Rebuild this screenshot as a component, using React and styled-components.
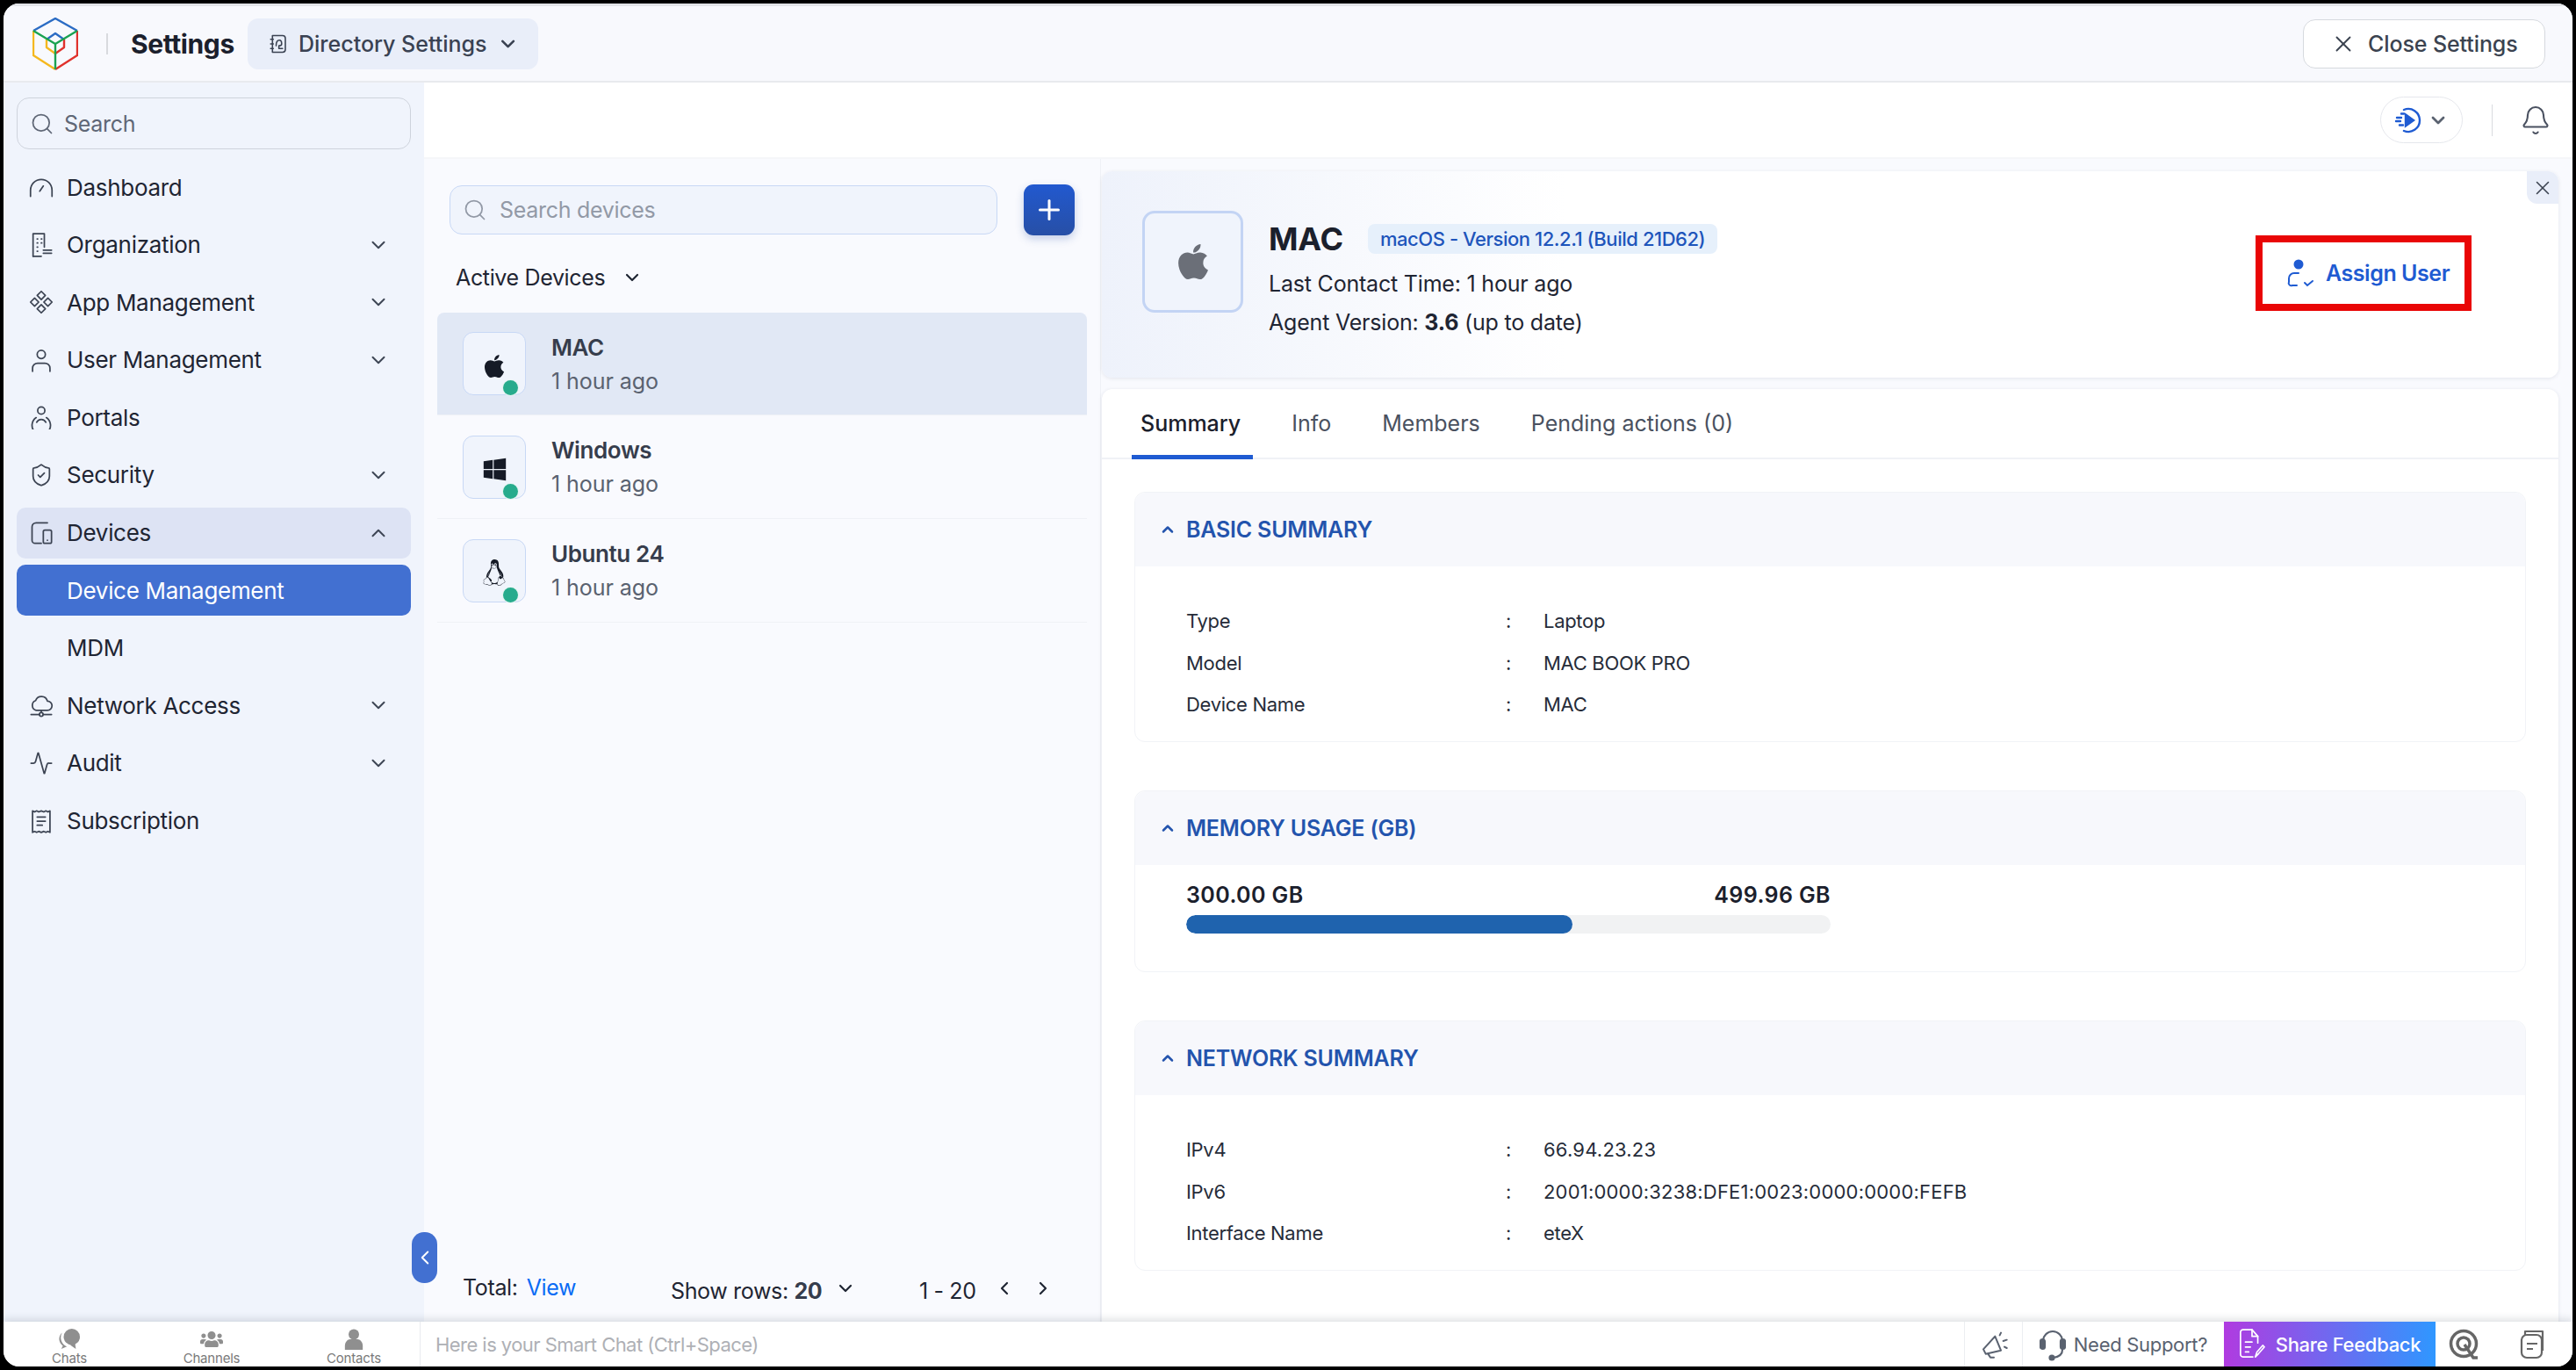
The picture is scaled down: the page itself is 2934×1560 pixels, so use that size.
import React from "react";
import styled, { createGlobalStyle } from "styled-components";
import { FaApple, FaWindows, FaLinux, FaUsers } from "react-icons/fa";
import { ChevronDown, ChevronUp, ChevronLeft, ChevronRight, Search, X, Plus, Bell, ShieldCheck, Activity } from "lucide-react";

const GlobalStyle = createGlobalStyle`
  html, body { margin: 0; padding: 0; background: #000; }
  * { box-sizing: border-box; }
  body { font-family: Inter, "Noto Sans", sans-serif; color: #1c2230; }
`;

const Frame = styled.div`
  width: 2934px;
  height: 1560px;
  padding: 4px;
  background: #000;
`;

const Shell = styled.div`
  width: 100%;
  height: 100%;
  display: flex;
  flex-direction: column;
  background: #fff;
  border-radius: 18px;
  overflow: hidden;
`;

const Header = styled.header`
  height: 90px;
  flex: none;
  display: flex;
  align-items: center;
  padding: 0 31px 0 33px;
  background: #f8f9fd;
  border-top: 3px solid #e2e4e8;
  border-bottom: 2px solid #e8eaee;
`;

const Divider = styled.span`
  width: 2px;
  height: 24px;
  margin: 0 26px 0 32px;
  background: #d8dade;
`;

const AppTitle = styled.h1`
  margin: 0 15px 0 0;
  font-size: 30px;
  font-weight: 700;
  letter-spacing: -0.4px;
  color: #1b202c;
`;

const DirectoryPill = styled.div`
  height: 58px;
  width: 331px;
  display: flex;
  align-items: center;
  gap: 11px;
  padding: 0 22px;
  border-radius: 12px;
  background: #e9eef9;
  font-size: 25px;
  font-weight: 500;
  color: #3a4252;
  letter-spacing: 0;
  white-space: nowrap;
`;

const CloseButton = styled.button`
  margin-left: auto;
  height: 56px;
  width: 276px;
  display: flex;
  align-items: center;
  gap: 13px;
  padding: 0 0 0 30px;
  border: 1.5px solid #d6d9de;
  border-radius: 14px;
  background: #fff;
  font: 500 25px Inter, sans-serif;
  letter-spacing: -0.1px;
  color: #3b4350;
  white-space: nowrap;
`;

const Body = styled.div`
  flex: 1;
  min-height: 0;
  display: flex;
  position: relative;
`;

const Sidebar = styled.aside`
  width: 479px;
  flex: none;
  padding: 17px 15px;
  background: #f0f4fc;
  display: flex;
  flex-direction: column;
`;

const SearchBox = styled.div`
  height: ${(p) => (p.$tall ? "56px" : "59px")};
  display: flex;
  align-items: center;
  gap: ${(p) => (p.$tall ? "14px" : "11px")};
  padding: 0 14px;
  flex: ${(p) => (p.$grow ? 1 : "none")};
  border: 1.5px solid ${(p) => (p.$tall ? "#c8d8f5" : "#ced3dc")};
  border-radius: 14px;
  background: #f0f4fc;
  font-size: 25px;
  letter-spacing: -0.3px;
  color: ${(p) => (p.$tall ? "#9299a6" : "#5f6776")};
`;

const NavList = styled.nav`
  margin-top: 14px;
  display: flex;
  flex-direction: column;
  gap: 7.6px;
`;

const NavItem = styled.div`
  height: 58px;
  display: flex;
  align-items: center;
  padding: 0 24px 0 14px;
  border-radius: 10px;
  font-size: 26px;
  letter-spacing: -0.3px;
  color: ${(p) => (p.$active ? "#fff" : "#1f2533")};
  background: ${(p) => (p.$active ? "#4270d1" : p.$open ? "#dde3f4" : "transparent")};
`;

const NavIcon = styled.span`
  width: 43px;
  flex: none;
  display: flex;
  color: #3d4554;
`;

const NavLabel = styled.span`
  flex: 1;
  padding-left: ${(p) => (p.$child ? "43px" : 0)};
  white-space: nowrap;
`;

const ListPanel = styled.section`
  width: 770px;
  flex: none;
  display: flex;
  flex-direction: column;
  padding: 29px 15px 0;
  background: #f9fafe;
`;

const SubHeader = styled.div`
  height: 87px;
  flex: none;
  display: flex;
  align-items: center;
  justify-content: flex-end;
  padding: 0 24px 0 0;
  background: #fff;
  border-bottom: 2px solid #f5f6f9;
`;

const PlayPill = styled.div`
  width: 94px;
  height: 53px;
  display: flex;
  align-items: center;
  justify-content: center;
  gap: 6px;
  border: 1.5px solid #e5e7ec;
  border-radius: 27px;
  color: #5a6270;
`;

const VLine = styled.span`
  width: 1.5px;
  height: 36px;
  margin: 0 31px 0 33px;
  background: #d9dbe0;
`;

const MainColumn = styled.div`
  flex: 1;
  min-width: 0;
  display: flex;
  flex-direction: column;
`;

const Columns = styled.div`
  flex: 1;
  min-height: 0;
  display: flex;
`;

const SearchRow = styled.div`
  display: flex;
  align-items: center;
  gap: 30px;
  padding: 0 14px;
`;

const AddButton = styled.button`
  width: 58px;
  height: 58px;
  flex: none;
  display: flex;
  align-items: center;
  justify-content: center;
  padding: 0;
  border: 0;
  border-radius: 11px;
  color: #fff;
  background: linear-gradient(180deg, #2259cf, #274fa6);
  box-shadow: 0 4px 10px rgba(39, 79, 166, 0.25);
`;

const FilterRow = styled.div`
  height: 30px;
  margin: 33px 0 25px 21px;
  display: flex;
  align-items: center;
  gap: 19px;
  font-size: 25px;
  letter-spacing: -0.35px;
  color: #1f2533;
`;

const DeviceRow = styled.div`
  height: ${(p) => (p.$active ? "117px" : "118px")};
  display: flex;
  align-items: center;
  gap: 29px;
  padding: 0 29px;
  border-radius: ${(p) => (p.$active ? "8px 8px 0 0" : 0)};
  background: ${(p) => (p.$active ? "#e1e8f5" : "transparent")};
  border-bottom: 1.5px solid #eff1f6;
`;

const DeviceIcon = styled.div`
  width: 72px;
  height: 72px;
  flex: none;
  position: relative;
  display: flex;
  align-items: center;
  justify-content: center;
  padding-top: 5px;
  border: 1.5px solid #c8d8f5;
  border-radius: 12px;
  background: #f0f4fc;
  color: #151a26;
`;

const StatusDot = styled.span`
  position: absolute;
  right: 8px;
  bottom: -1px;
  width: 17px;
  height: 17px;
  border-radius: 50%;
  background: #27ab8d;
  box-shadow: 0 0 0 1px #e4f5f0;
`;

const DeviceName = styled.div`
  font-size: 26px;
  font-weight: 600;
  letter-spacing: -0.4px;
  color: #363d4c;
`;

const DeviceTime = styled.div`
  margin-top: 8px;
  font-size: 25px;
  letter-spacing: -0.05px;
  color: #5a6270;
`;

const ListFooter = styled.div`
  margin-top: auto;
  height: 62px;
  display: flex;
  padding: 0 0 0 29px;
  font-size: 25px;
  letter-spacing: -0.35px;
  color: #1f2533;
`;

const TotalLabel = styled.div`
  width: 237px;
  padding-top: 8px;
`;

const ViewLink = styled.span`
  margin-left: 10px;
  color: #0a6cf5;
`;

const RowsControl = styled.div`
  width: 283px;
  display: flex;
  align-items: flex-start;
  gap: 15px;
  padding-top: 12px;
`;

const Strong = styled.b`
  font-weight: 700;
  color: #363d4c;
`;

const Pager = styled.div`
  display: flex;
  align-items: flex-start;
  gap: 20px;
  padding-top: 12px;
`;

const DetailPanel = styled.section`
  flex: 1;
  min-width: 0;
  padding: 14px 16px 0 1px;
  background: #f9fafe;
  border-left: 1.5px solid #eff1f6;
`;

const DeviceCard = styled.div`
  height: 235px;
  position: relative;
  display: flex;
  align-items: center;
  padding: 0 0 0 46px;
  border-radius: 12px;
  background: linear-gradient(90deg, #eef2fb 0%, #fff 32%);
  box-shadow: 0 1px 4px rgba(30, 40, 70, 0.1);
`;

const CloseTab = styled.div`
  position: absolute;
  top: 0;
  right: 0;
  width: 36px;
  height: 37px;
  display: flex;
  align-items: center;
  justify-content: center;
  border-radius: 0 12px 0 12px;
  background: #e9eef9;
  color: #3b4350;
`;

const LargeIcon = styled.div`
  width: 115px;
  height: 116px;
  flex: none;
  margin-bottom: 30px;
  display: flex;
  align-items: center;
  justify-content: center;
  border: 3px solid #c3d4f4;
  border-radius: 14px;
  background: #f0f4fc;
  color: #6b6f78;
`;

const DeviceMeta = styled.div`
  margin-left: 29px;
  padding-top: 6px;
  display: flex;
  flex-direction: column;
  gap: 14px;
  font-size: 25px;
  letter-spacing: -0.2px;
  color: #1f2533;
`;

const TitleRow = styled.div`
  display: flex;
  align-items: center;
  gap: 28px;
`;

const DeviceTitle = styled.div`
  font-size: 36px;
  font-weight: 700;
  color: #1b202c;
`;

const VersionBadge = styled.span`
  padding: 4px 14px;
  border-radius: 8px;
  background: #e6f0fb;
  font-size: 22px;
  font-weight: 500;
  letter-spacing: -0.45px;
  color: #1e55bb;
`;

const AssignBox = styled.div`
  position: absolute;
  left: 1314px;
  top: 73px;
  width: 246px;
  height: 86px;
  display: flex;
  align-items: center;
  gap: 13px;
  padding-left: 27px;
  border: 8px solid #e90606;
  font-size: 25px;
  font-weight: 600;
  letter-spacing: -0.45px;
  color: #1f5bd2;
  white-space: nowrap;
`;

const TabsCard = styled.div`
  height: 1080px;
  margin-top: 13px;
  border-radius: 12px 12px 0 0;
  background: #fff;
  box-shadow: 0 1px 4px rgba(30, 40, 70, 0.12);
`;

const TabBar = styled.div`
  height: 80px;
  display: flex;
  gap: 58px;
  padding: 0 0 0 44px;
  border-bottom: 2px solid #f0f2f6;
`;

const Tab = styled.div`
  position: relative;
  height: 80px;
  padding: 24px 0 0;
  font-size: 25px;
  font-weight: ${(p) => (p.$active ? 500 : 400)};
  letter-spacing: 0;
  color: ${(p) => (p.$active ? "#1b202c" : "#4a5160")};
  ${(p) => p.$active && `
    &::after {
      content: "";
      position: absolute;
      left: -10px;
      right: -14px;
      bottom: 0;
      height: 5px;
      background: #1f5bd2;
    }
  `}
`;

const Sections = styled.div`
  display: flex;
  flex-direction: column;
  gap: 55px;
  padding: 37px 37px 0 37px;
`;

const SectionCard = styled.div`
  height: ${(p) => p.$height}px;
  border: 1.5px solid #f1f3f7;
  border-radius: 12px;
`;

const SectionHead = styled.div`
  height: 84px;
  display: flex;
  align-items: center;
  gap: 11px;
  padding-left: 27px;
  background: #f7f8fc;
  border-radius: 12px 12px 0 0;
  font-size: 25px;
  font-weight: 600;
  letter-spacing: -0.2px;
  color: #2354ad;
`;

const InfoRows = styled.div`
  padding: 48px 0 0 58px;
  display: flex;
  flex-direction: column;
  gap: 19.6px;
`;

const InfoRow = styled.div`
  height: 28px;
  display: grid;
  grid-template-columns: 364px 43px 1fr;
  align-items: center;
  font-size: 22px;
  letter-spacing: -0.3px;
  color: #262c39;
`;

const InfoValue = styled.span`
  letter-spacing: ${(p) => (p.$numeric ? "0.2px" : "-0.3px")};
`;

const Usage = styled.div`
  width: 734px;
  margin: 19px 0 0 58px;
`;

const UsageLabels = styled.div`
  display: flex;
  justify-content: space-between;
  font-size: 25px;
  font-weight: 600;
  letter-spacing: 0.4px;
  color: #1b202c;
`;

const UsageTrack = styled.div`
  height: 21px;
  margin-top: 8px;
  border-radius: 11px;
  background: #f1f2f3;
  overflow: hidden;
`;

const UsageFill = styled.div`
  height: 100%;
  border-radius: 11px;
  background: #1f63ae;
`;

const CollapseHandle = styled.div`
  position: absolute;
  left: 465px;
  bottom: 44px;
  width: 29px;
  height: 58px;
  display: flex;
  align-items: center;
  justify-content: center;
  border-radius: 14px;
  background: #4270d1;
  color: #fff;
`;

const ChatBar = styled.footer`
  height: 51px;
  flex: none;
  position: relative;
  display: flex;
  align-items: stretch;
  background: #fff;
  box-shadow: 0 -3px 8px rgba(30, 40, 60, 0.14);
`;

const ChatTabs = styled.div`
  width: 475px;
  flex: none;
  display: flex;
  justify-content: center;
  border-right: 1.5px solid #e9ebef;
`;

const ChatTab = styled.div`
  width: 162px;
  flex: none;
  display: flex;
  flex-direction: column;
  align-items: center;
  padding-top: 8px;
  font-size: 15px;
  letter-spacing: -0.2px;
  color: #7a7a7a;
`;

const ChatInput = styled.div`
  flex: 1;
  display: flex;
  align-items: center;
  padding-left: 17px;
  font-size: 22px;
  letter-spacing: -0.55px;
  color: #aeb0b5;
`;

const BarCell = styled.div`
  display: flex;
  align-items: center;
  justify-content: center;
  gap: 9px;
  width: ${(p) => p.$width}px;
  border-left: ${(p) => (p.$line ? "1.5px solid #eceef1" : 0)};
  font-size: 22px;
  letter-spacing: -0.3px;
  color: #5a6270;
`;

const FeedbackCell = styled(BarCell)`
  background: linear-gradient(90deg, #b03be0, #2f97ff);
  color: #fff;
  font-weight: 500;
  gap: 12px;
`;

const Svg = ({ size = 28, vb = 24, children, sw = 1.5 }) => (
  <svg width={size} height={size} viewBox={`0 0 ${vb} ${vb}`} fill="none" stroke="currentColor" strokeWidth={sw} strokeLinecap="round" strokeLinejoin="round">
    {children}
  </svg>
);

const Logo = () => (
  <svg width="52" height="60" viewBox="0 0 52 60" fill="none" strokeWidth="2.4" strokeLinejoin="round">
    <path d="M1 15 26 1l25 14" stroke="#2b6cc4" />
    <path d="M16 25 26 18l10 7" stroke="#2b6cc4" />
    <path d="M1 15v28l25 16" stroke="#f5b81e" />
    <path d="M16 25v9l10 7" stroke="#f5b81e" />
    <path d="M51 15v28L26 59" stroke="#e0322c" />
    <path d="M36 25v9l-10 7" stroke="#e0322c" />
    <path d="M1 15 26 30 51 15M26 30v29" stroke="#1aa251" />
  </svg>
);

const BookIcon = () => (
  <Svg size={28}>
    <path d="M6 3h11a3 3 0 0 1 3 3v12a3 3 0 0 1-3 3H6z" />
    <path d="M4 7h3M4 12h3M4 17h3" />
    <path d="M10 14c0-4 1-6 3.5-6S16 10 16 12s-3 2-3 2v3h4" />
  </Svg>
);

const GaugeIcon = () => (
  <Svg>
    <path d="M1.500 21v-6a10.500 10.500 0 0 1 21 0v6" />
    <path d="M10.500 16l3.500-5" />
  </Svg>
);

const BuildingIcon = () => (
  <Svg>
    <path d="M4 23V1h11v13" />
    <path d="M4 23h8M8 6h.5M12 6h.5M8 10h.5M12 10h.5M8 14h.5M8 18h.5M14 17h8M14 20h8" />
  </Svg>
);

const AppsIcon = () => (
  <Svg>
    <path d="M12 1.500l4 4-4 4-4-4zM12 14.500l4 4-4 4-4-4zM5.500 8l4 4-4 4-4-4zM18.500 8l4 4-4 4-4-4z" />
  </Svg>
);

const UserIcon = () => (
  <Svg>
    <circle cx="12" cy="6.500" r="4" />
    <path d="M3.500 23v-3a5 5 0 0 1 5-5h7a5 5 0 0 1 5 5v3" />
  </Svg>
);

const PortalIcon = () => (
  <Svg>
    <circle cx="12" cy="5.500" r="3.500" />
    <path d="M7 12.500a9 9 0 1 0 10 0" />
    <path d="M7.500 17a5 5 0 0 1 9 0" />
  </Svg>
);

const DevicesIcon = () => (
  <Svg>
    <path d="M18 2H7a4 4 0 0 0-4 4v13a3 3 0 0 0 3 3h6" />
    <rect x="14" y="9" width="8" height="13" rx="1.500" />
    <path d="M18 19h.01" />
  </Svg>
);

const CloudIcon = () => (
  <Svg>
    <path d="M7 17a5 5 0 0 1-.5-9.500 6 6 0 0 1 11.500.5 4.500 4.500 0 0 1 0 9z" />
    <path d="M2 21h8M14 21h8M12 17v2" />
    <circle cx="12" cy="21" r="1.800" />
  </Svg>
);

const ReceiptIcon = () => (
  <Svg>
    <path d="M3.500 2l2 1 2-1 2 1 2.500-1 2.500 1 2-1 2 1 2-1v21l-2-1-2 1-2-1-2.500 1-2.500-1-2 1-2-1-2 1z" />
    <path d="M8 8h8M8 12h8M8 16h5" />
  </Svg>
);

const PlayIcon = () => (
  <svg width="32" height="32" viewBox="0 0 32 32" fill="none" stroke="#1f5bd2" strokeWidth="2.400" strokeLinecap="round">
    <path d="M11 4a13 13 0 1 1 0 24" />
    <path d="M11 8.500h-3M8 13H3M7 17H2M10 21.500H6" />
    <path d="M13 9.500l9 6.500-9 6.500z" fill="#1f5bd2" />
  </svg>
);

const AssignIcon = () => (
  <svg width="32" height="34" viewBox="0 0 32 34" fill="none" stroke="#1f5bd2" strokeWidth="2" strokeLinecap="round">
    <circle cx="14" cy="7" r="5.500" fill="#1f5bd2" stroke="none" />
    <path d="M14 17H9a6 6 0 0 0-6 6v4a3 3 0 0 0 4 4h5" />
    <path d="M21 28l3 3 6-5" />
  </svg>
);

const ChatsIcon = () => (
  <svg width="28" height="26" viewBox="0 0 28 26" fill="#8f8f8f">
    <ellipse cx="17" cy="10" rx="10" ry="10" />
    <path d="M5 5a10 10 0 0 0 1 16l-2 4 7-3a12 12 0 0 1-6-17z" />
    <path d="M15 20l7 5-1-7z" />
  </svg>
);

const ContactIcon = () => (
  <svg width="24" height="26" viewBox="0 0 24 26" fill="#8f8f8f">
    <circle cx="12" cy="7" r="6.500" />
    <path d="M1 26v-5c0-5 4-8 6-8h10c2 0 6 3 6 8v5z" />
  </svg>
);

const MegaphoneIcon = () => (
  <Svg size={32}>
    <path d="M3 16l10-11 5 12-13 3z" />
    <path d="M7 20l2 3h3M17 4l1-2M20 9l3-1M21 14l2 1" />
  </Svg>
);

const HeadsetIcon = () => (
  <svg width="30" height="38" viewBox="0 0 30 38" fill="none" stroke="#5a6270" strokeWidth="2.200" strokeLinecap="round">
    <path d="M4 15a11 11 0 0 1 22 0" />
    <rect x="1" y="13" width="5" height="11" rx="2.500" fill="#5a6270" />
    <rect x="24" y="13" width="5" height="11" rx="2.500" fill="#5a6270" />
    <path d="M26 25c0 5-4 8-10 9" />
    <circle cx="14" cy="34" r="2.500" fill="#5a6270" />
  </svg>
);

const FeedbackIcon = () => (
  <svg width="30" height="38" viewBox="0 0 32 40" fill="none" stroke="#fff" strokeWidth="1.800" strokeLinejoin="round" strokeLinecap="round">
    <path d="M17 35H5a3 3 0 0 1-3-3V5a3 3 0 0 1 3-3h11l7 8v8" />
    <path d="M16 2v8h7M8 17h8M8 23h6M8 29h4" />
    <path d="M20 35l2-6 7-8 2 2-7 8z" />
  </svg>
);

const QIcon = () => (
  <svg width="34" height="42" viewBox="0 0 34 42" fill="none" stroke="#666" strokeWidth="3.500">
    <circle cx="17" cy="20" r="14.500" />
    <circle cx="17" cy="20" r="7" />
    <path d="M18 21l10 15h5" />
  </svg>
);

const NotesIcon = () => (
  <svg width="30" height="34" viewBox="0 0 30 34" fill="none" stroke="#666" strokeWidth="2.200" strokeLinejoin="round">
    <rect x="3" y="6" width="23" height="26" rx="6" />
    <path d="M7 6V2h20v22" />
    <path d="M9 16h12M9 22h7" />
  </svg>
);

const navItems = [
  { label: "Dashboard", icon: <GaugeIcon /> },
  { label: "Organization", icon: <BuildingIcon />, chevron: true },
  { label: "App Management", icon: <AppsIcon />, chevron: true },
  { label: "User Management", icon: <UserIcon />, chevron: true },
  { label: "Portals", icon: <PortalIcon /> },
  { label: "Security", icon: <ShieldCheck size={28} strokeWidth={1.5} />, chevron: true },
  { label: "Devices", icon: <DevicesIcon />, open: true },
  { label: "Device Management", child: true, active: true },
  { label: "MDM", child: true },
  { label: "Network Access", icon: <CloudIcon />, chevron: true },
  { label: "Audit", icon: <Activity size={28} strokeWidth={1.5} />, chevron: true },
  { label: "Subscription", icon: <ReceiptIcon /> },
];

const devices = [
  { name: "MAC", icon: <FaApple size={30} />, active: true },
  { name: "Windows", icon: <FaWindows size={29} /> },
  { name: "Ubuntu 24", icon: <FaLinux size={30} /> },
];

const basicRows = [
  ["Type", "Laptop"],
  ["Model", "MAC BOOK PRO"],
  ["Device Name", "MAC"],
];

const networkRows = [
  ["IPv4", "66.94.23.23"],
  ["IPv6", "2001:0000:3238:DFE1:0023:0000:0000:FEFB"],
  ["Interface Name", "eteX"],
];

const Details = ({ rows }) => (
  <InfoRows>
    {rows.map(([key, value]) => (
      <InfoRow key={key}>
        <span>{key}</span>
        <span>:</span>
        <InfoValue $numeric={/\d/.test(value)}>{value}</InfoValue>
      </InfoRow>
    ))}
  </InfoRows>
);

const App = () => {
  return (
    <Frame>
      <GlobalStyle />
      <Shell>
        <Header>
          <Logo />
          <Divider />
          <AppTitle>Settings</AppTitle>
          <DirectoryPill>
            <BookIcon />
            Directory Settings
            <ChevronDown size={28} strokeWidth={2.5} />
          </DirectoryPill>
          <CloseButton>
            <X size={30} strokeWidth={1.5} />
            Close Settings
          </CloseButton>
        </Header>
        <Body>
          <Sidebar>
            <SearchBox>
              <Search size={28} strokeWidth={1.5} />
              Search
            </SearchBox>
            <NavList>
              {navItems.map((item) => (
                <NavItem key={item.label} $active={item.active} $open={item.open}>
                  {item.icon && <NavIcon>{item.icon}</NavIcon>}
                  <NavLabel $child={item.child}>{item.label}</NavLabel>
                  {item.chevron && <ChevronDown size={26} strokeWidth={1.8} color="#3d4554" />}
                  {item.open && <ChevronUp size={26} strokeWidth={1.8} color="#3d4554" />}
                </NavItem>
              ))}
            </NavList>
          </Sidebar>
          <MainColumn>
            <SubHeader>
              <PlayPill>
                <PlayIcon />
                <ChevronDown size={24} strokeWidth={2.8} />
              </PlayPill>
              <VLine />
              <Bell size={36} strokeWidth={1.4} color="#4a5160" />
            </SubHeader>
            <Columns>
              <ListPanel>
                <SearchRow>
                  <SearchBox $tall $grow>
                    <Search size={28} strokeWidth={1.5} />
                    Search devices
                  </SearchBox>
                  <AddButton>
                    <Plus size={36} strokeWidth={2} />
                  </AddButton>
                </SearchRow>
                <FilterRow>
                  Active Devices
                  <ChevronDown size={24} strokeWidth={2.2} />
                </FilterRow>
                {devices.map((device) => (
                  <DeviceRow key={device.name} $active={device.active}>
                    <DeviceIcon>
                      {device.icon}
                      <StatusDot />
                    </DeviceIcon>
                    <div>
                      <DeviceName>{device.name}</DeviceName>
                      <DeviceTime>1 hour ago</DeviceTime>
                    </div>
                  </DeviceRow>
                ))}
                <ListFooter>
                  <TotalLabel>
                    Total:<ViewLink>View</ViewLink>
                  </TotalLabel>
                  <RowsControl>
                    <span>
                      Show rows: <Strong>20</Strong>
                    </span>
                    <ChevronDown size={24} strokeWidth={2.2} />
                  </RowsControl>
                  <Pager>
                    1 - 20
                    <ChevronLeft size={24} strokeWidth={2.2} />
                    <ChevronRight size={24} strokeWidth={2.2} />
                  </Pager>
                </ListFooter>
              </ListPanel>
              <DetailPanel>
                <DeviceCard>
                  <CloseTab>
                    <X size={26} strokeWidth={1.4} />
                  </CloseTab>
                  <LargeIcon>
                    <FaApple size={46} />
                  </LargeIcon>
                  <DeviceMeta>
                    <TitleRow>
                      <DeviceTitle>MAC</DeviceTitle>
                      <VersionBadge>macOS - Version 12.2.1 (Build 21D62)</VersionBadge>
                    </TitleRow>
                    <div>Last Contact Time: 1 hour ago</div>
                    <div>
                      Agent Version: <b>3.6</b> (up to date)
                    </div>
                  </DeviceMeta>
                  <AssignBox>
                    <AssignIcon />
                    Assign User
                  </AssignBox>
                </DeviceCard>
                <TabsCard>
                  <TabBar>
                    <Tab $active>Summary</Tab>
                    <Tab>Info</Tab>
                    <Tab>Members</Tab>
                    <Tab>Pending actions (0)</Tab>
                  </TabBar>
                  <Sections>
                    <SectionCard $height={285}>
                      <SectionHead>
                        <ChevronUp size={20} strokeWidth={3} />
                        BASIC SUMMARY
                      </SectionHead>
                      <Details rows={basicRows} />
                    </SectionCard>
                    <SectionCard $height={207}>
                      <SectionHead>
                        <ChevronUp size={20} strokeWidth={3} />
                        MEMORY USAGE (GB)
                      </SectionHead>
                      <Usage>
                        <UsageLabels>
                          <span>300.00 GB</span>
                          <span>499.96 GB</span>
                        </UsageLabels>
                        <UsageTrack>
                          <UsageFill style={{ width: `${(300 / 499.96) * 100}%` }} />
                        </UsageTrack>
                      </Usage>
                    </SectionCard>
                    <SectionCard $height={285}>
                      <SectionHead>
                        <ChevronUp size={20} strokeWidth={3} />
                        NETWORK SUMMARY
                      </SectionHead>
                      <Details rows={networkRows} />
                    </SectionCard>
                  </Sections>
                </TabsCard>
              </DetailPanel>
            </Columns>
          </MainColumn>
          <CollapseHandle>
            <ChevronLeft size={26} strokeWidth={1.8} />
          </CollapseHandle>
        </Body>
        <ChatBar>
          <ChatTabs>
            <ChatTab>
              <ChatsIcon />
              Chats
            </ChatTab>
            <ChatTab>
              <FaUsers size={26} color="#8f8f8f" />
              Channels
            </ChatTab>
            <ChatTab>
              <ContactIcon />
              Contacts
            </ChatTab>
          </ChatTabs>
          <ChatInput>Here is your Smart Chat (Ctrl+Space)</ChatInput>
          <BarCell $width={66} $line>
            <MegaphoneIcon />
          </BarCell>
          <BarCell $width={230} $line>
            <HeadsetIcon />
            Need Support?
          </BarCell>
          <FeedbackCell $width={241}>
            <FeedbackIcon />
            Share Feedback
          </FeedbackCell>
          <BarCell $width={64}>
            <QIcon />
          </BarCell>
          <BarCell $width={92}>
            <NotesIcon />
          </BarCell>
        </ChatBar>
      </Shell>
    </Frame>
  );
};

export default App;
